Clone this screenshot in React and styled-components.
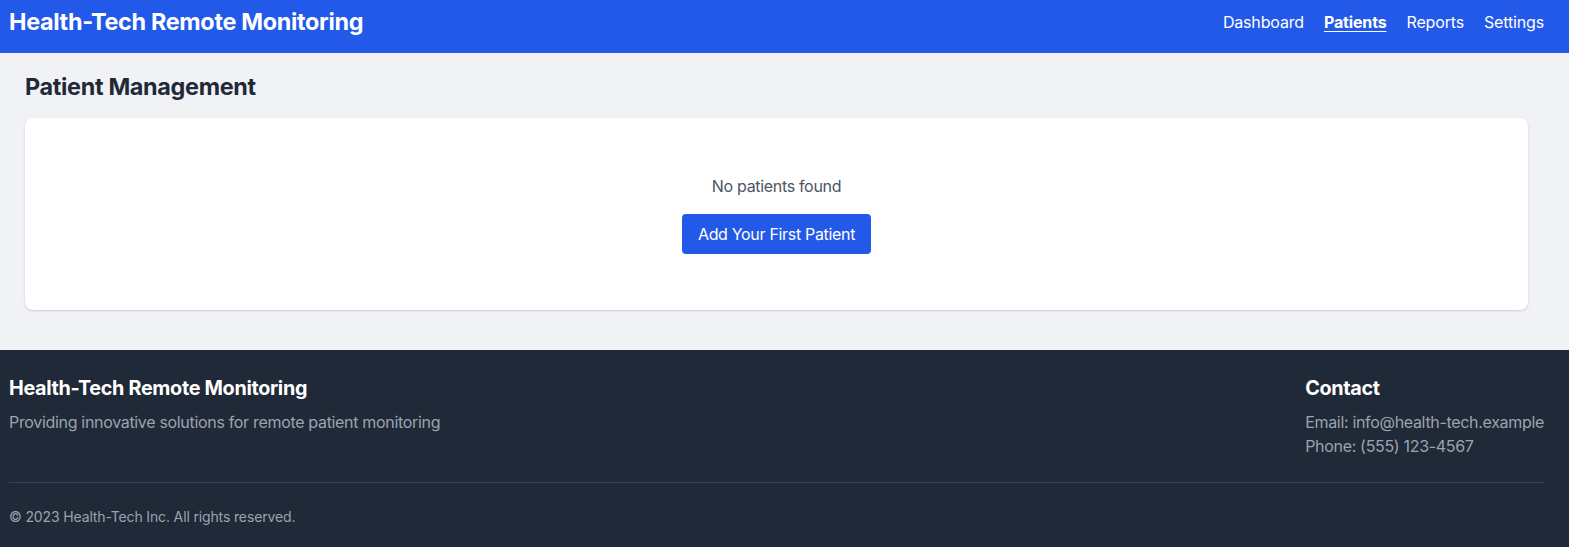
import React from "react";
import styled, { createGlobalStyle } from "styled-components";

const GlobalStyle = createGlobalStyle`
  body {
    margin: 0;
    font-family: Inter, "Noto Sans", "Liberation Sans", sans-serif;
    letter-spacing: -0.02em;
    background: #f0f2f5;
  }
  * { box-sizing: border-box; }
`;

const Header = styled.header`
  display: flex;
  align-items: flex-start;
  justify-content: space-between;
  height: 53px;
  padding: 6px 25px 0 9px;
  background: #2259e8;
  color: #fff;
`;

const Brand = styled.h1`
  margin: 0;
  font-size: 23.4px;
  line-height: 32px;
  font-weight: 700;
`;

const Nav = styled.nav`
  display: flex;
  gap: 20px;
  padding-top: 4px;
`;

const NavLink = styled.a`
  color: #fff;
  font-size: 16px;
  line-height: 24px;
  letter-spacing: -0.01em;
  text-decoration: ${(p) => (p.$active ? "underline" : "none")};
  font-weight: ${(p) => (p.$active ? 700 : 400)};
  text-underline-offset: 3px;
  cursor: pointer;
`;

const Main = styled.main`
  padding: 18px 41px 40px 25px;
`;

const PageTitle = styled.h2`
  margin: 0 0 15px;
  font-size: 23.4px;
  line-height: 32px;
  font-weight: 700;
  color: #1f2937;
`;

const Card = styled.div`
  background: #fff;
  border-radius: 8px;
  box-shadow: 0 1px 3px rgba(0, 0, 0, 0.1), 0 1px 2px rgba(0, 0, 0, 0.06);
  padding: 56px 24px 56px;
  display: flex;
  flex-direction: column;
  align-items: center;
  gap: 16px;
`;

const EmptyText = styled.p`
  margin: 0;
  font-size: 16px;
  line-height: 24px;
  color: #4b5563;
`;

const PrimaryButton = styled.button`
  background: #2259e8;
  color: #fff;
  border: none;
  border-radius: 4px;
  height: 40px;
  padding: 0 16px;
  font-family: inherit;
  font-size: 16px;
  letter-spacing: -0.02em;
  cursor: pointer;
`;

const Footer = styled.footer`
  background: #1f2937;
  padding: 24px 25px 20px 9px;
`;

const FooterTop = styled.div`
  display: flex;
  justify-content: space-between;
  padding-bottom: 24px;
  border-bottom: 1px solid #374151;
`;

const FooterCol = styled.div`
  display: flex;
  flex-direction: column;
`;

const FooterTitle = styled.h3`
  margin: 0 0 8px;
  font-size: 19.8px;
  line-height: 28px;
  font-weight: 700;
  color: #fff;
`;

const FooterText = styled.p`
  margin: 0;
  font-size: 16px;
  line-height: 24px;
  color: #9ca3af;
`;

const Copyright = styled.p`
  margin: 24px 0 0;
  font-size: 14px;
  line-height: 20px;
  letter-spacing: -0.01em;
  color: #9ca3af;
`;

export default function App() {
  return (
    <>
      <GlobalStyle />
      <Header>
        <Brand>Health-Tech Remote Monitoring</Brand>
        <Nav>
          <NavLink>Dashboard</NavLink>
          <NavLink $active>Patients</NavLink>
          <NavLink>Reports</NavLink>
          <NavLink>Settings</NavLink>
        </Nav>
      </Header>
      <Main>
        <PageTitle>Patient Management</PageTitle>
        <Card>
          <EmptyText>No patients found</EmptyText>
          <PrimaryButton>Add Your First Patient</PrimaryButton>
        </Card>
      </Main>
      <Footer>
        <FooterTop>
          <FooterCol>
            <FooterTitle>Health-Tech Remote Monitoring</FooterTitle>
            <FooterText>Providing innovative solutions for remote patient monitoring</FooterText>
          </FooterCol>
          <FooterCol>
            <FooterTitle>Contact</FooterTitle>
            <FooterText>Email: info@health-tech.example</FooterText>
            <FooterText>Phone: (555) 123-4567</FooterText>
          </FooterCol>
        </FooterTop>
        <Copyright>© 2023 Health-Tech Inc. All rights reserved.</Copyright>
      </Footer>
    </>
  );
}
